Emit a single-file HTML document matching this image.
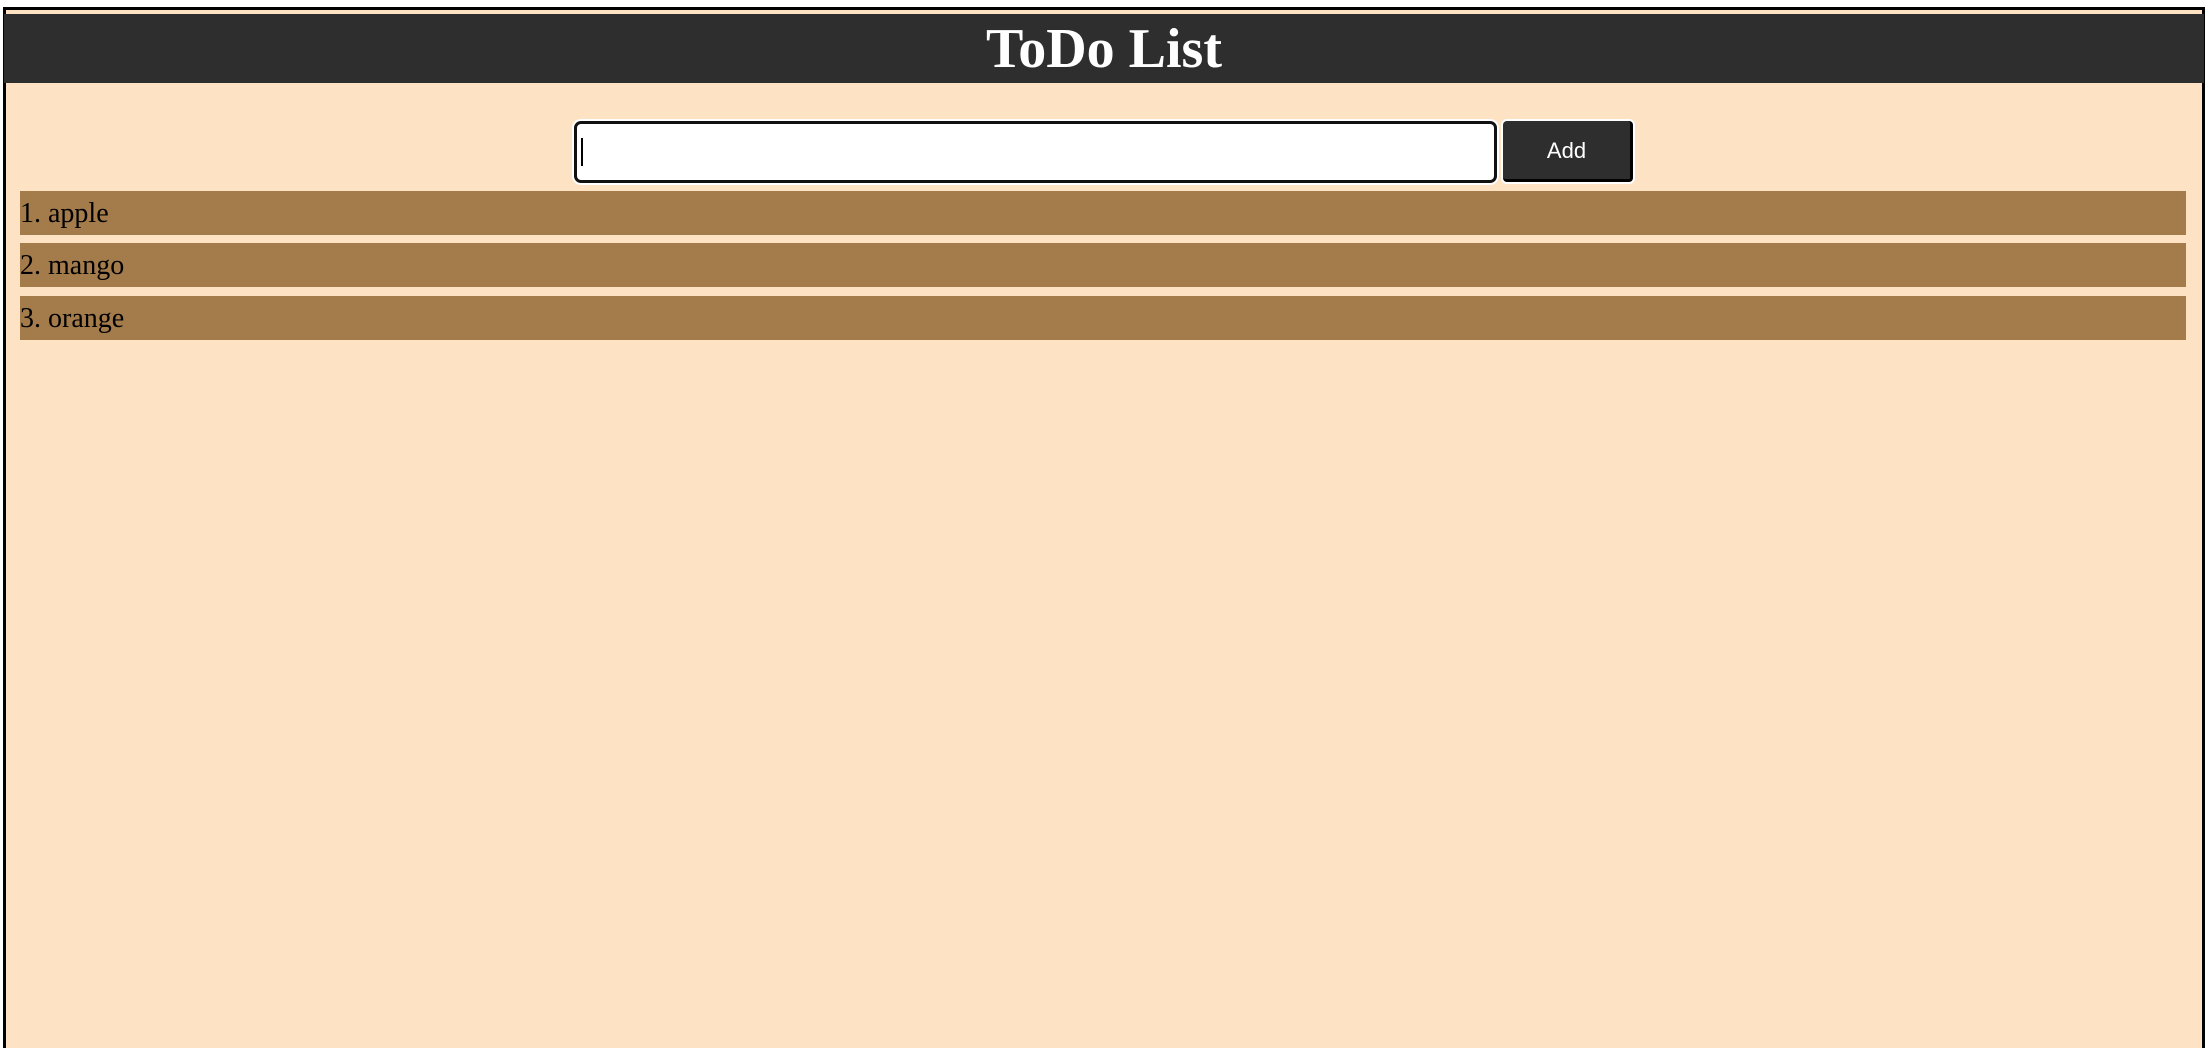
<!DOCTYPE html>
<html><head><style>
html,body{margin:0;padding:0;background:#fff;width:2211px;height:1048px;overflow:hidden;position:relative}
.frame{position:absolute;left:3px;top:7px;width:2202px;height:1041px;border:3px solid #000;border-bottom:none;background:#fde3c4;box-sizing:border-box}
.hdr{position:absolute;left:4px;top:14px;width:2200px;height:69px;background:#2e2e2e;color:#fff;font:bold 56px "Liberation Serif",serif;text-align:center;line-height:70px}
.inp{position:absolute;left:574px;top:121px;width:923px;height:62px;box-sizing:border-box;border:3px solid #111;border-radius:7px;background:#fff;box-shadow:0 0 0 2px #fff}
.caret{position:absolute;left:4px;top:14px;width:2px;height:28px;background:#000}
.btn{position:absolute;left:1503px;top:121px;width:130px;height:61px;box-sizing:border-box;background:#2e2e2e;border-right:3px solid #000;border-bottom:3px solid #000;border-radius:4px;color:#fff;font:22px "Liberation Sans",sans-serif;text-align:center;line-height:60px;box-shadow:0 0 0 2px #fff}
.item{position:absolute;left:20px;width:2166px;height:44px;background:#a47b4b;font:28px "Liberation Serif",serif;color:#000;line-height:46px}
</style></head><body>
<div class="frame"></div>
<div class="hdr">ToDo List</div>
<div class="inp"><div class="caret"></div></div>
<div class="btn">Add</div>
<div class="item" style="top:191px">1. apple</div>
<div class="item" style="top:243px">2. mango</div>
<div class="item" style="top:296px">3. orange</div>
</body></html>
